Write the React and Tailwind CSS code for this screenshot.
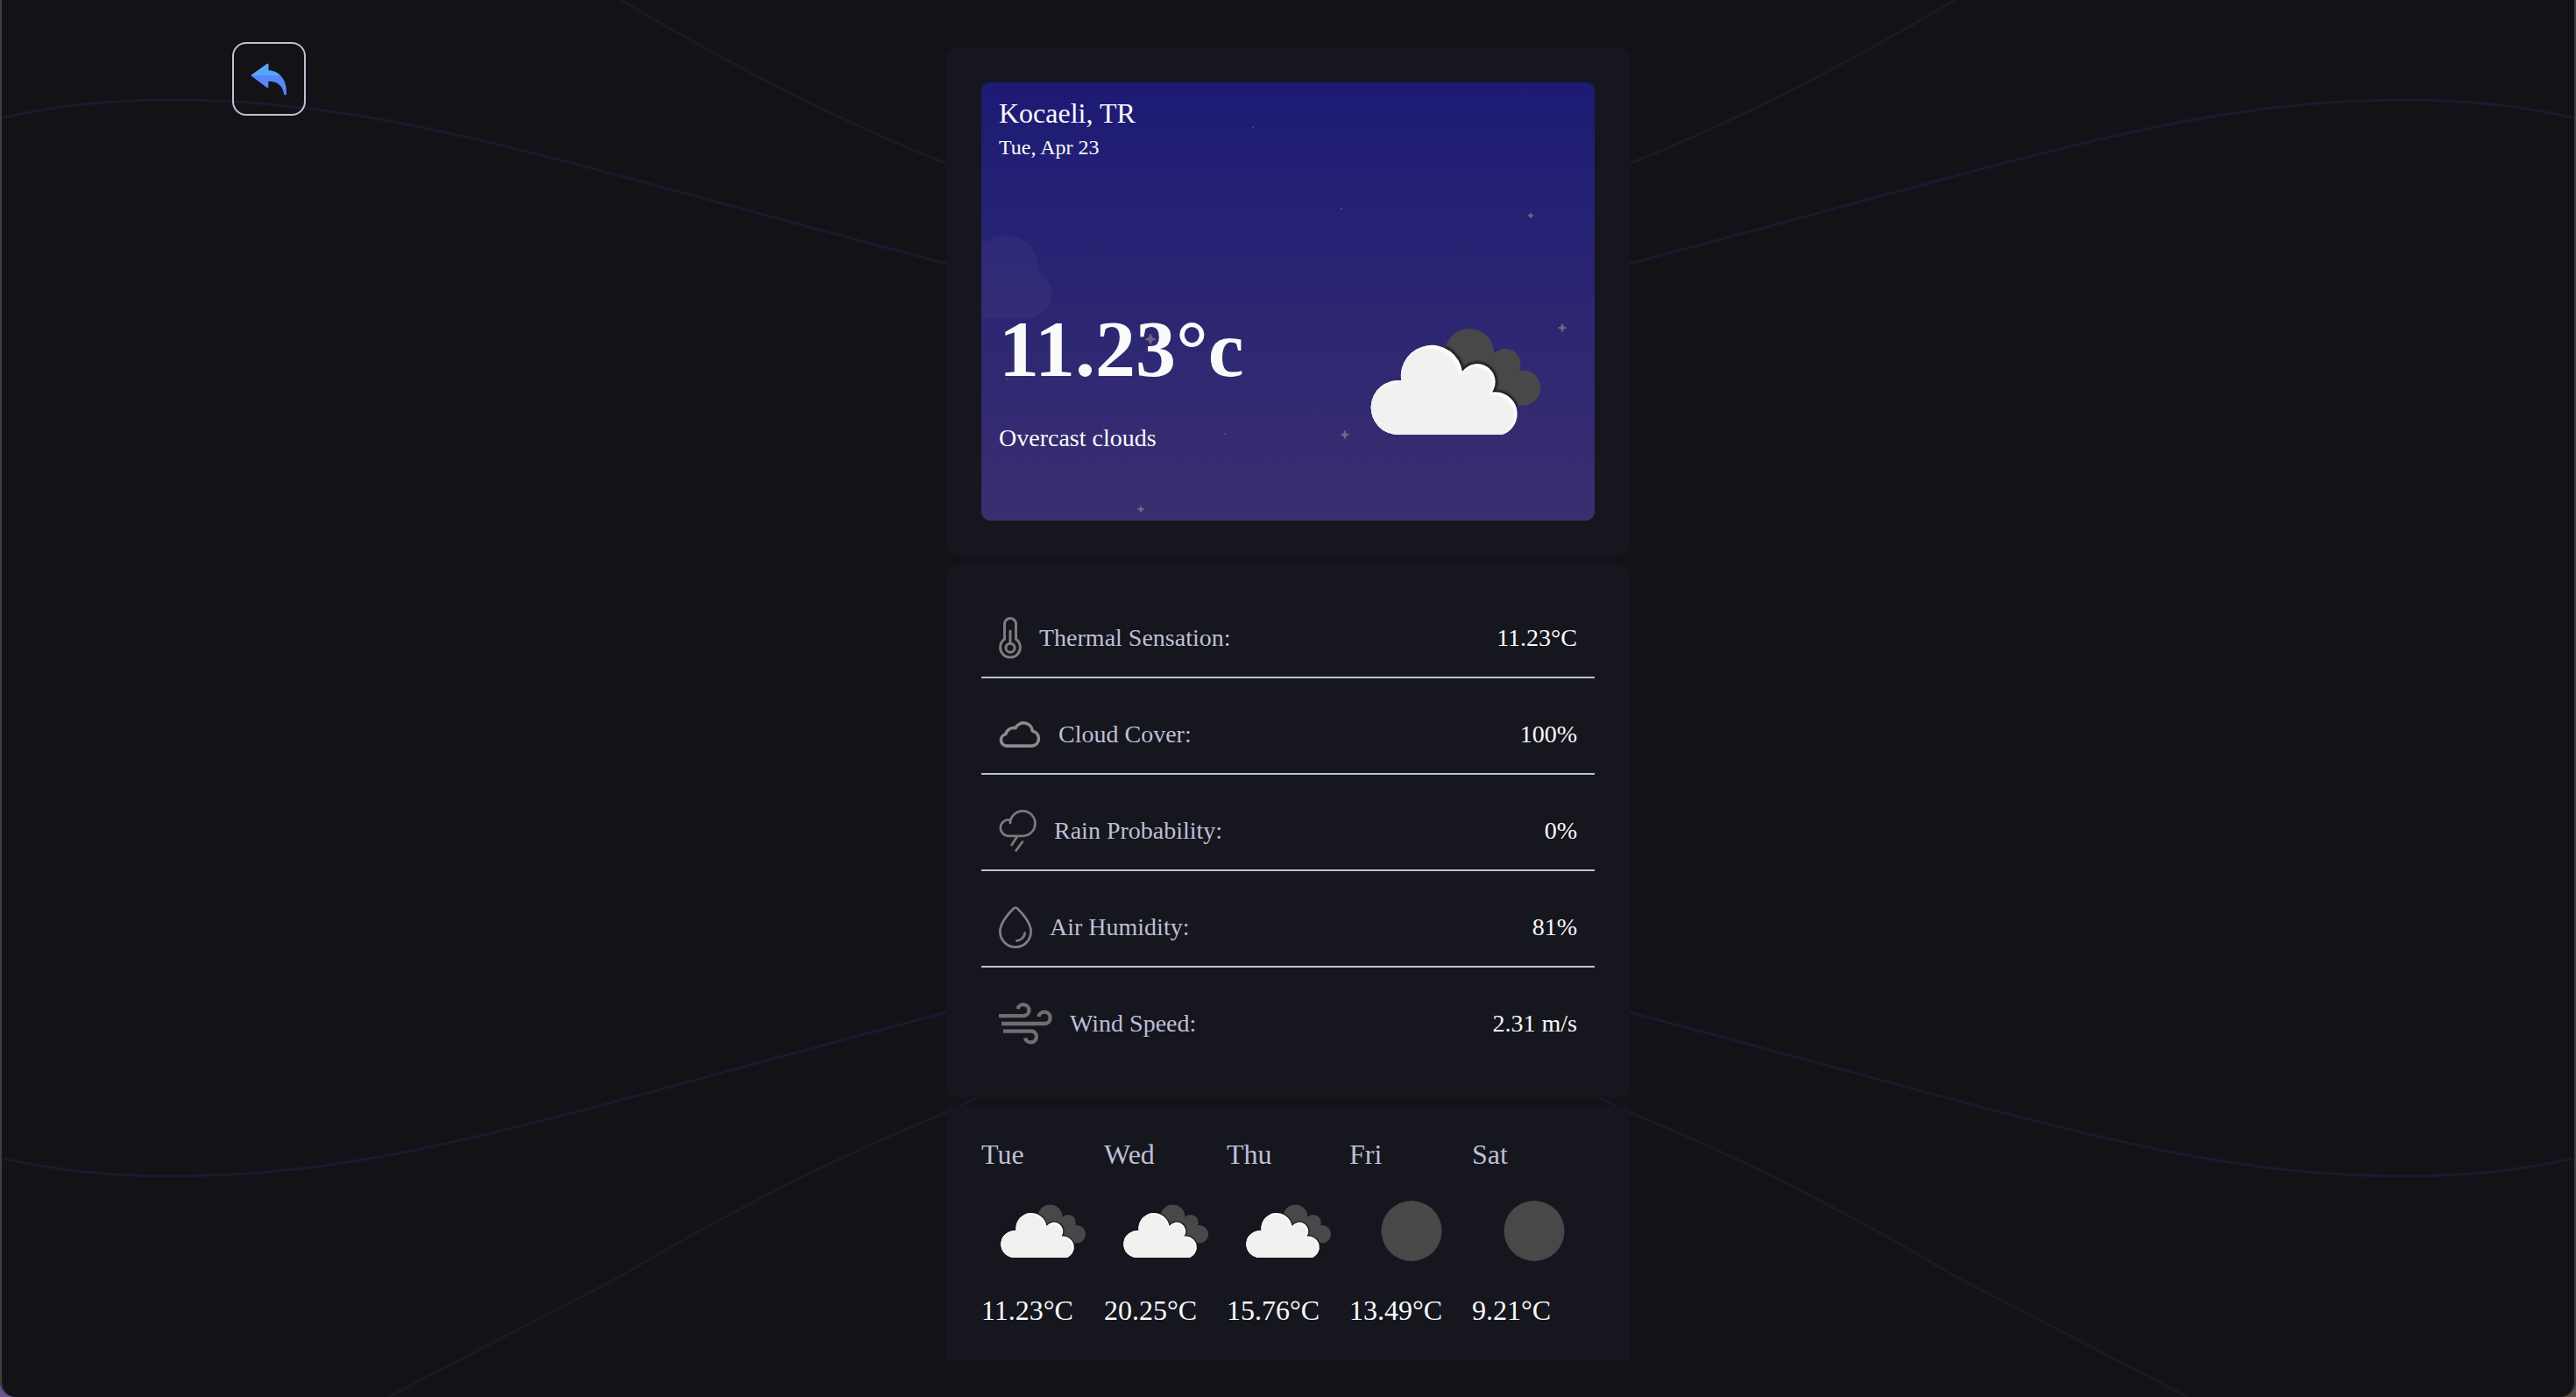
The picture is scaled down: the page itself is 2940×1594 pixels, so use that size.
import React, { useId } from "react";

const DETAILS = [
  { label: "Thermal Sensation:", value: "11.23°C", Icon: ThermometerIcon },
  { label: "Cloud Cover:", value: "100%", Icon: CloudIcon },
  { label: "Rain Probability:", value: "0%", Icon: RainIcon },
  { label: "Air Humidity:", value: "81%", Icon: DropIcon },
  { label: "Wind Speed:", value: "2.31 m/s", Icon: WindIcon },
];

const DAYS = [
  { day: "Tue", temp: "11.23°C", Icon: OvercastPicture },
  { day: "Wed", temp: "20.25°C", Icon: OvercastPicture },
  { day: "Thu", temp: "15.76°C", Icon: OvercastPicture },
  { day: "Fri", temp: "13.49°C", Icon: MoonPicture },
  { day: "Sat", temp: "9.21°C", Icon: MoonPicture },
];

function ThermometerIcon() {
  return (
    <svg className="h-12 w-[26px] shrink-0" viewBox="0 0 26 48" fill="none" stroke="#7d7d80" strokeWidth="3" strokeLinecap="round" aria-hidden="true">
      <path d="M6.5 25.3V8a6.5 6.5 0 0 1 13 0v17.3A11.4 11.4 0 1 1 6.5 25.3z" />
      <circle cx="13" cy="35.2" r="5" />
      <path d="M13 16v14" />
    </svg>
  );
}

function CloudIcon() {
  return (
    <svg className="h-[30px] w-12 shrink-0" viewBox="0 0 48 30" fill="none" stroke="#8b8b8d" strokeWidth="3.6" strokeLinejoin="round" aria-hidden="true">
      <path d="M8.5 28.1A6.8 6.8 0 0 1 7.8 14.7A9.3 9.3 0 0 1 19 7.8A10.2 10.2 0 0 1 38.4 11.2A8.6 8.6 0 0 1 38.5 28.1z" />
    </svg>
  );
}

function RainIcon() {
  return (
    <svg className="h-12 w-[43px] shrink-0" viewBox="0 0 43 48" fill="none" stroke="#7b7b7e" strokeWidth="2.7" strokeLinecap="round" aria-hidden="true">
      <path d="M13 15.2A14.2 14.2 0 1 1 27.3 29.8H10.5a9.2 9.2 0 1 1 2.4-18.2V15" />
      <path d="M20.5 31l-5.8 9M27 36.5l-7.4 10" />
    </svg>
  );
}

function DropIcon() {
  return (
    <svg className="h-12 w-[38px] shrink-0" viewBox="0 0 38 48" fill="none" stroke="#7f7f82" strokeWidth="2.7" strokeLinecap="round" aria-hidden="true">
      <path d="M16.7 2.7q2.3-2.4 4.6 0C28 9 36.6 20 36.6 29a17.6 17.6 0 0 1-35.2 0C1.4 20 10 9 16.7 2.7z" />
      <path d="M29.7 30.5a10 10 0 0 1-9.4 8.8" />
    </svg>
  );
}

function WindIcon() {
  return (
    <svg className="h-12 w-[61px] shrink-0" viewBox="0 0 61 48" fill="none" stroke="#6f6f73" strokeWidth="4.3" strokeLinecap="butt" aria-hidden="true">
      <path d="M0 15.2h28.5a6.5 6.5 0 1 0-6.9-8" />
      <path d="M3 24h49.4a6.7 6.7 0 1 0-7-8" />
      <path d="M5 32.6h33.3a6.5 6.5 0 1 1-8.2 7.6" />
    </svg>
  );
}

function OvercastPicture({ className }) {
  const id = useId();
  const front = (
    <path d="M76 202a31 31 0 1 1 3.2-61.8A35 35 0 1 1 149 130A20.6 20.6 0 0 1 183 153.5A25 25 0 0 1 195 201.8z" />
  );
  return (
    <svg className={className} viewBox="0 0 280 280" role="img" aria-label="Overcast clouds">
      <defs>
        <clipPath id={`${id}-back`}>
          <circle cx="157" cy="109" r="28" />
          <circle cx="198" cy="121.5" r="17.5" />
          <circle cx="218" cy="148.5" r="20.3" />
          <path d="M140 120l45-12 25 22 5 39-25 0-50-25z" />
        </clipPath>
        <clipPath id={`${id}-front`}>{front}</clipPath>
        <filter id={`${id}-soft`} x="-10%" y="-10%" width="120%" height="120%">
          <feGaussianBlur stdDeviation="1" />
        </filter>
      </defs>
      <g clipPath={`url(#${id}-back)`}>
        <rect width="280" height="280" fill="#484849" />
        <g fill="#1c1c1e" stroke="#1c1c1e" strokeWidth="5" filter={`url(#${id}-soft)`}>{front}</g>
      </g>
      <g fill="#ffffff">{front}</g>
      <g clipPath={`url(#${id}-front)`}>
        <g fill="#f1f1ef" transform="translate(-3 3)" filter={`url(#${id}-soft)`}>{front}</g>
        <path d="M40 150h60v55H40zM80 185h110v20H80z" fill="#f1f1ef" />
      </g>
    </svg>
  );
}

function MoonPicture({ className }) {
  return (
    <svg className={className} viewBox="0 0 280 280" role="img" aria-label="Clear night">
      <circle cx="142" cy="141" r="69" fill="#484849" />
    </svg>
  );
}

function Star({ x, y, r, o }) {
  const q = r * 0.28;
  return (
    <path
      d={`M${x} ${y - r}L${x + q} ${y - q}L${x + r} ${y}L${x + q} ${y + q}L${x} ${y + r}L${x - q} ${y + q}L${x - r} ${y}L${x - q} ${y - q}z`}
      fill="#a08c92"
      stroke="#a08c92"
      opacity={o}
    />
  );
}

function NightSky() {
  return (
    <svg className="absolute inset-0 h-full w-full" viewBox="0 0 700 500" preserveAspectRatio="xMidYMid slice" aria-hidden="true">
      <path d="M-60 269V178H-3A37 37 0 0 1 4 182.5A36 36 0 0 1 29 174.5A36 36 0 0 1 64.5 215.5A30 30 0 0 1 80.5 241A28 28 0 0 1 52 269z" fill="#ffffff" opacity="0.035" />
      <Star x={627} y={152} r={3} o={0.6} />
      <Star x={663} y={280} r={4.5} o={0.6} />
      <Star x={415} y={402} r={4.5} o={0.6} />
      <Star x={182} y={487} r={3.5} o={0.6} />
      <Star x={193} y={293} r={6} o={0.6} />
      <Star x={310} y={51} r={1} o={0.35} />
      <Star x={411} y={144} r={1} o={0.4} />
      <Star x={30} y={339} r={1} o={0.3} />
      <Star x={278} y={401} r={1} o={0.3} />
    </svg>
  );
}

function BackdropCurves() {
  const quarter = (
    <>
      <path d="M0 135C60 121 130 114 194 114C440 114 620 180 1081 301" stroke="#151c2e" strokeWidth="3" />
      <path d="M709 0Q905 117 1081 187L1120 206" stroke="#181b27" strokeWidth="3" />
      <path d="M709 0L443 -138" stroke="#181b27" strokeWidth="3" />
    </>
  );
  return (
    <svg className="absolute inset-0 h-full w-full" viewBox="0 0 2940 1594" preserveAspectRatio="none" fill="none" aria-hidden="true">
      {quarter}
      <g transform="matrix(-1 0 0 1 2940 0)">{quarter}</g>
      <g transform="matrix(1 0 0 -1 0 1456)">{quarter}</g>
      <g transform="matrix(-1 0 0 -1 2940 1456)">{quarter}</g>
    </svg>
  );
}

function BackArrow() {
  const arrow = (
    <path d="M1.5 14.2L19.5 1.5V9C33 9.4 41 20 40 35.5H39C37.5 27 33 19.5 19.5 20V27.5z" />
  );
  return (
    <svg className="h-[37px] w-[42px]" viewBox="0 0 42 37" strokeWidth="1.6" strokeLinejoin="round" aria-hidden="true">
      <defs>
        <clipPath id="back-arrow-top">
          <rect width="42" height="14" />
        </clipPath>
      </defs>
      <g fill="#5788fb" stroke="#5788fb">{arrow}</g>
      <g clipPath="url(#back-arrow-top)">
        <g fill="#54a9f6" stroke="#54a9f6">{arrow}</g>
      </g>
    </svg>
  );
}

export default function App() {
  return (
    <div className="min-h-screen bg-linear-to-r from-[#6a5593] to-[#5a4d45] font-['Liberation_Serif',serif] text-[#fafafa]">
      <div className="relative min-h-screen overflow-hidden rounded-b-[18px] bg-[#131317]">
        <BackdropCurves />
        <div className="pointer-events-none absolute inset-0 rounded-b-[18px] border-x-2 border-[#404043]" />

        <div className="relative grid grid-cols-[1fr_minmax(0,780px)_1fr]">
          <nav className="pt-12 pl-[9vw]">
            <button
              type="button"
              aria-label="Back"
              className="flex size-[84px] items-center justify-center rounded-2xl border-2 border-[#bfbfd4]"
            >
              <BackArrow />
            </button>
          </nav>

          <main className="flex flex-col gap-2.5 pt-[54px] pb-10">
            <section className="rounded-xl bg-[#15161e] p-10">
              <div className="relative flex h-[500px] flex-col justify-between overflow-hidden rounded-[10px] bg-linear-to-b from-[#1d1a75] to-[#3a2e70] p-5">
                <NightSky />
                <header className="relative flex flex-col gap-2.5">
                  <h1 className="text-[32px] leading-[30px]">Kocaeli, TR</h1>
                  <p className="text-2xl leading-7">Tue, Apr 23</p>
                </header>
                <div className="relative flex items-center justify-between">
                  <div className="flex flex-col gap-11">
                    <strong className="text-[92px] leading-[88px] font-bold">11.23°c</strong>
                    <p className="text-[28px] leading-7">Overcast clouds</p>
                  </div>
                  <OvercastPicture className="size-[280px]" />
                </div>
              </div>
            </section>

            <section className="rounded-xl bg-[#15161e] p-10">
              <dl className="flex flex-col gap-5">
                {DETAILS.map(({ label, value, Icon }) => (
                  <div
                    key={label}
                    className="flex items-center justify-between border-b-2 border-[#bfbfd4] p-5 text-[28px] leading-7 last:border-b-0"
                  >
                    <dt className="flex h-12 items-center gap-5 text-[#bfbfd4]">
                      <Icon />
                      {label}
                    </dt>
                    <dd>{value}</dd>
                  </div>
                ))}
              </dl>
            </section>

            <section className="bg-[#15161e] p-10">
              <ul className="grid grid-cols-5">
                {DAYS.map(({ day, temp, Icon }) => (
                  <li key={day} className="flex flex-col text-[32px]">
                    <span className="leading-[30px] text-[#bfbfd4]">{day}</span>
                    <Icon className="mt-0.5 mb-1 aspect-square w-full" />
                    <span className="leading-[34px]">{temp}</span>
                  </li>
                ))}
              </ul>
            </section>
          </main>
        </div>
      </div>
    </div>
  );
}
